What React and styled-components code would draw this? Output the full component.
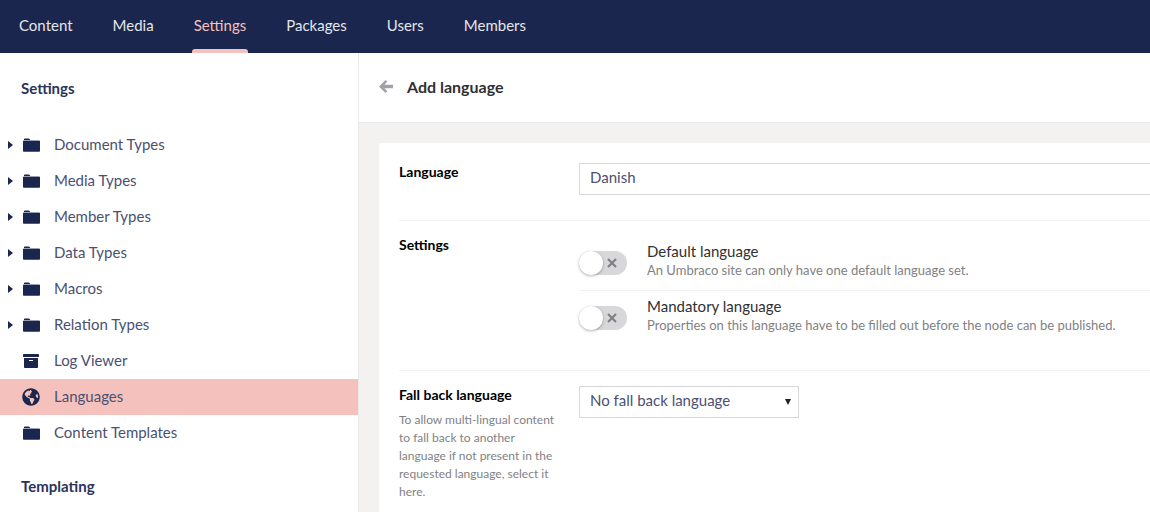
import React from 'react';
import styled, { createGlobalStyle } from 'styled-components';
import { FaArchive, FaGlobeAmericas } from 'react-icons/fa';

const GlobalStyle = createGlobalStyle`
	html, body {
		margin: 0;
		height: 100%;
		overflow: hidden;
	}
	body {
		font-family: Lato, "Open Sans", sans-serif;
		font-size: 15px;
		color: #1b264f;
		background: #fff;
	}
	* {
		box-sizing: border-box;
	}
`;

const Page = styled.div`
	width: 1150px;
	height: 512px;
	display: flex;
	flex-direction: column;
	overflow: hidden;
`;

const TopBar = styled.header`
	height: 53px;
	flex-shrink: 0;
	background: #1b264f;
	display: flex;
	margin-left: -1px;
`;

const TopLink = styled.a`
	position: relative;
	display: flex;
	align-items: center;
	padding: 0 20px 4px;
	height: 100%;
	font-size: 15px;
	color: ${ p => p.$active ? '#f5c1bc' : '#e4e5ea' };

	&::after {
		content: '';
		display: ${ p => p.$active ? 'block' : 'none' };
		position: absolute;
		left: 18px;
		right: 18px;
		bottom: 0;
		height: 4px;
		background: #f5c1bc;
		border-radius: 3px 3px 0 0;
	}
`;

const Body = styled.div`
	flex: 1;
	display: flex;
	min-height: 0;
`;

const Sidebar = styled.aside`
	width: 359px;
	flex-shrink: 0;
	border-right: 1px solid #e9e9eb;
	background: #fff;
	overflow: hidden;
`;

const SectionTitle = styled.h3`
	margin: 0;
	padding-left: 21px;
	font-size: 15px;
	line-height: 20px;
	font-weight: 700;
	color: #2b3359;
`;

const TreeTitle = styled(SectionTitle)`
	margin-top: 25px;
`;

const Tree = styled.ul`
	list-style: none;
	margin: 29px 0 0;
	padding: 0;
`;

const TemplatingTitle = styled(SectionTitle)`
	margin-top: 25px;
`;

const TreeRow = styled.li`
	height: 36px;
	display: flex;
	align-items: center;
	position: relative;
	padding-left: 22px;
	color: #4b5071;
	background: ${ p => p.$active ? '#f5c1bc' : 'transparent' };
`;

const Caret = styled.span`
	position: absolute;
	left: 8px;
	top: 50%;
	margin-top: -4px;
	width: 0;
	height: 0;
	border-left: 5px solid #1b264f;
	border-top: 4px solid transparent;
	border-bottom: 4px solid transparent;
`;

const IconSlot = styled.span`
	width: 18px;
	display: flex;
	align-items: center;
	justify-content: center;
	margin-right: 14px;
	color: #1b264f;
`;

const TreeLabel = styled.span`
	font-size: 15px;
	margin-top: -2px;
`;

const Main = styled.main`
	flex: 1;
	min-width: 0;
	background: #f3f2f0;
	display: flex;
	flex-direction: column;
`;

const EditorHeader = styled.div`
	height: 70px;
	flex-shrink: 0;
	background: #fff;
	border-bottom: 1px solid #e9e9eb;
	display: flex;
	align-items: center;
	padding: 0 0 2px 20px;
`;

const BackButton = styled.span`
	display: flex;
	margin-right: 14px;
	color: #a2a1a6;
`;

const EditorTitle = styled.h2`
	margin: 0;
	font-size: 16px;
	font-weight: 700;
	color: #303033;
`;

const Card = styled.section`
	width: 1000px;
	margin: 20px 0 0 20px;
	padding: 20px 20px 0;
	background: #fff;
	border-radius: 3px 0 0 0;
	flex: 1;
`;

const Property = styled.div`
	display: grid;
	grid-template-columns: 180px 1fr;
	padding: ${ p => p.$padding };
	border-bottom: ${ p => p.$last ? 'none' : '1px solid #f3f2f0' };
`;

const PropLabel = styled.div`
	font-size: 14px;
	line-height: 18px;
	font-weight: 700;
	color: #000;
	padding-right: 20px;
`;

const PropHelp = styled.div`
	margin-top: 7px;
	font-size: 12px;
	line-height: 18px;
	font-weight: 400;
	color: #818185;
`;

const TextInput = styled.div`
	height: 32px;
	border: 1px solid #d8d7d9;
	display: flex;
	align-items: center;
	padding: 0 10px 5px;
	font-size: 15px;
	color: #4b5071;
`;

const SelectBox = styled(TextInput)`
	width: 220px;
	justify-content: space-between;
	padding-right: 7px;
`;

const SelectArrow = styled.span`
	width: 0;
	height: 0;
	margin-top: 5px;
	border-top: 6px solid #222;
	border-left: 3.5px solid transparent;
	border-right: 3.5px solid transparent;
`;

const ToggleRow = styled.div`
	display: flex;
	align-items: flex-start;
	padding: ${ p => p.$padding };
	border-bottom: ${ p => p.$divided ? '1px solid #f3f2f0' : 'none' };
`;

const Toggle = styled.span`
	position: relative;
	flex-shrink: 0;
	width: 48px;
	height: 24px;
	margin-top: 10px;
	border-radius: 12px;
	background: #d8d7d9;
	display: flex;
	align-items: center;
	justify-content: flex-end;
	padding-right: 10px;
	color: #818185;
`;

const Knob = styled.span`
	position: absolute;
	left: 0;
	top: 0;
	width: 24px;
	height: 24px;
	border-radius: 50%;
	background: #fff;
	box-shadow: 0 1px 3px rgba(0, 0, 0, 0.3);
`;

const ToggleText = styled.div`
	margin-left: 20px;
`;

const ToggleName = styled.div`
	font-size: 15px;
	line-height: 20px;
	color: #303033;
`;

const ToggleHint = styled.div`
	font-size: 13px;
	line-height: 18px;
	color: #818185;
`;

const FolderIcon = () => (
	<svg width="17" height="14" viewBox="0 0 18 14" preserveAspectRatio="none" fill="currentColor">
		<path d="M1 1.600C1 .9 1.500.5 2.100.5h3.700c.5 0 .9.2 1.200.6L7.700 2H17v.3H1z" />
		<path d="M0 2.800h18v9.900c0 .7-.5 1.100-1.100 1.100H1.100C.5 13.800 0 13.400 0 12.700z" />
	</svg>
);

const BackArrow = () => (
	<svg width="14" height="13" viewBox="0 0 14 13" fill="currentColor">
		<path d="M6.500 0 8.300 1.800 5.400 4.800H14v3.400H5.400l2.900 3-1.800 1.800L0 6.500z" />
	</svg>
);

const CrossIcon = () => (
	<svg width="10" height="10" viewBox="0 0 10 10" stroke="currentColor" strokeWidth="2.200" fill="none">
		<path d="M1 1l8 8M9 1l-8 8" />
	</svg>
);

const NAV = ['Content', 'Media', 'Settings', 'Packages', 'Users', 'Members'];

const TREE = [
	{ label: 'Document Types', caret: true },
	{ label: 'Media Types', caret: true },
	{ label: 'Member Types', caret: true },
	{ label: 'Data Types', caret: true },
	{ label: 'Macros', caret: true },
	{ label: 'Relation Types', caret: true },
	{ label: 'Log Viewer', icon: <FaArchive size={16} /> },
	{ label: 'Languages', icon: <FaGlobeAmericas size={18} />, active: true },
	{ label: 'Content Templates' },
];

export default function App() {
	return (
		<Page>
			<GlobalStyle />
			<TopBar>
				{ NAV.map(name => (
					<TopLink key={name} $active={name === 'Settings'}>{ name }</TopLink>
				)) }
			</TopBar>
			<Body>
				<Sidebar>
					<TreeTitle>Settings</TreeTitle>
					<Tree>
						{ TREE.map(item => (
							<TreeRow key={item.label} $active={item.active}>
								{ item.caret && <Caret /> }
								<IconSlot>{ item.icon || <FolderIcon /> }</IconSlot>
								<TreeLabel>{ item.label }</TreeLabel>
							</TreeRow>
						)) }
					</Tree>
					<TemplatingTitle>Templating</TemplatingTitle>
				</Sidebar>
				<Main>
					<EditorHeader>
						<BackButton><BackArrow /></BackButton>
						<EditorTitle>Add language</EditorTitle>
					</EditorHeader>
					<Card>
						<Property $padding="0 0 25px">
							<PropLabel>Language</PropLabel>
							<TextInput>Danish</TextInput>
						</Property>
						<Property $padding="15px 0 0">
							<PropLabel>Settings</PropLabel>
							<div>
								<ToggleRow $padding="5px 0 11px" $divided>
									<Toggle><Knob /><CrossIcon /></Toggle>
									<ToggleText>
										<ToggleName>Default language</ToggleName>
										<ToggleHint>An Umbraco site can only have one default language set.</ToggleHint>
									</ToggleText>
								</ToggleRow>
								<ToggleRow $padding="5px 0 36px">
									<Toggle><Knob /><CrossIcon /></Toggle>
									<ToggleText>
										<ToggleName>Mandatory language</ToggleName>
										<ToggleHint>Properties on this language have to be filled out before the node can be published.</ToggleHint>
									</ToggleText>
								</ToggleRow>
							</div>
						</Property>
						<Property $padding="15px 0 0" $last>
							<PropLabel>
								Fall back language
								<PropHelp>To allow multi-lingual content to fall back to another language if not present in the requested language, select it here.</PropHelp>
							</PropLabel>
							<div>
								<SelectBox>
									No fall back language
									<SelectArrow />
								</SelectBox>
							</div>
						</Property>
					</Card>
				</Main>
			</Body>
		</Page>
	);
}
